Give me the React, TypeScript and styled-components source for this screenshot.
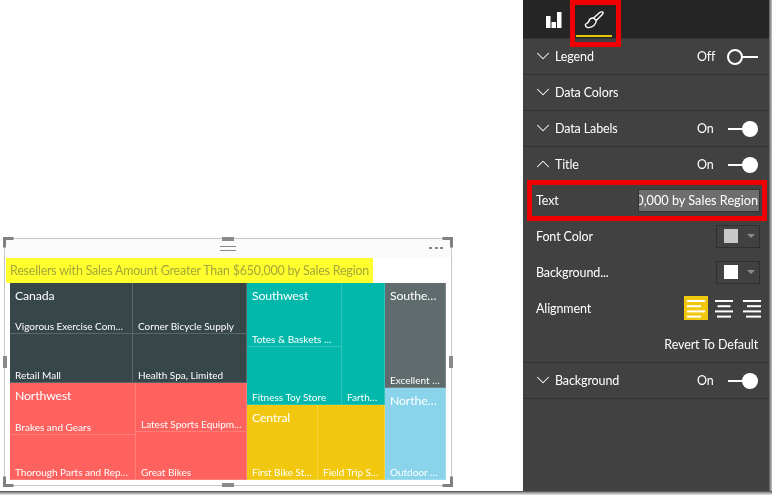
import React from "react";
import styled, { createGlobalStyle } from "styled-components";
import { ChevronDown, ChevronUp } from "lucide-react";

const Global = createGlobalStyle`
  html, body { margin: 0; padding: 0; background: #fff; }
  body { font-family: "Lato", "Open Sans", sans-serif; }
`;

const Page = styled.div`
  width: 772px;
  height: 495px;
  display: flex;
  flex-direction: column;
  overflow: hidden;
  background: #fff;
  filter: blur(0.35px);
`;

const Body = styled.div`
  height: 491px;
  flex: none;
  display: flex;
`;

const BottomEdge = styled.div`
  height: 4px;
  flex: none;
  background: linear-gradient(#4a4a4a, #a8a8a8 50%, #e4e4e4);
`;

const RightEdge = styled.div`
  width: 3px;
  flex: none;
  background: linear-gradient(90deg, #5a5a5a, #c8c8c8);
`;

const Canvas = styled.main`
  width: 523px;
  flex: none;
  padding: 238px 0 0 4px;
  box-sizing: border-box;
`;

const Visual = styled.section`
  width: 448px;
  height: 248px;
  box-sizing: border-box;
  border: 1px solid #c8c8c8;
  position: relative;
  display: flex;
  flex-direction: column;
`;

const Handle = styled.span<{ $x: string; $y: string; $w: number; $h: number }>`
  position: absolute;
  background: #8a8a8a;
  width: ${(p) => p.$w}px;
  height: ${(p) => p.$h}px;
  ${(p) => p.$x}
  ${(p) => p.$y}
`;

const Corner = styled.svg<{ $pos: string }>`
  position: absolute;
  width: 11px;
  height: 11px;
  ${(p) => p.$pos}
`;

const VisualHeader = styled.div`
  height: 19px;
  flex: none;
  background: #fafafa;
  position: relative;
`;

const Grip = styled.span`
  position: absolute;
  left: 215px;
  top: 7px;
  width: 16px;
  height: 3px;
  border-top: 1px solid #8a8a8a;
  border-bottom: 1px solid #8a8a8a;
`;

const Dots = styled.span`
  position: absolute;
  right: 8px;
  top: 8px;
  display: flex;
  gap: 2.5px;
`;

const Dot = styled.i`
  width: 3px;
  height: 2px;
  background: #888;
`;

const TitleBar = styled.div`
  height: 25px;
  flex: none;
  display: flex;
  margin-left: 1px;
`;

const TitleText = styled.span`
  background: #ffff2e;
  color: #a5a53a;
  font-size: 12.4px;
  letter-spacing: -0.17px;
  line-height: 25px;
  padding: 0 4px;
  width: 367px;
  box-sizing: border-box;
  white-space: nowrap;
  overflow: hidden;
`;

const Treemap = styled.div`
  margin-left: 5px;
  width: 436px;
  height: 197px;
  display: flex;
`;

const Stack = styled.div<{ $size: number }>`
  flex: 0 0 ${(p) => p.$size}px;
  display: flex;
  flex-direction: column;
  min-width: 0;
  min-height: 0;
`;

const Band = styled.div<{ $size: number }>`
  flex: 0 0 ${(p) => p.$size}px;
  display: flex;
  min-width: 0;
  min-height: 0;
`;

const Cell = styled.div<{ $size: number; $bg: string }>`
  flex: 0 0 ${(p) => p.$size}px;
  background: ${(p) => p.$bg};
  box-shadow: inset -1px -1px 0 rgba(255, 255, 255, 0.18);
  box-sizing: border-box;
  padding: 0 3px 0 5px;
  display: flex;
  flex-direction: column;
  justify-content: space-between;
  color: #fff;
  min-width: 0;
  overflow: hidden;
`;

const Region = styled.div`
  font-size: 12.3px;
  letter-spacing: -0.15px;
  line-height: 17px;
  margin-top: 4px;
  padding-right: 3px;
  white-space: nowrap;
  overflow: hidden;
  text-overflow: ellipsis;
`;

const Leaf = styled.div`
  margin-top: auto;
  font-size: 10px;
  line-height: 13px;
  margin-bottom: 1px;
  padding-right: 2px;
  white-space: nowrap;
  overflow: hidden;
  text-overflow: ellipsis;
`;

const Panel = styled.aside`
  width: 246px;
  flex: none;
  background: #414141;
  color: #fff;
  position: relative;
  font-size: 12.5px;
  letter-spacing: -0.12px;
`;

const Tabs = styled.nav`
  height: 38px;
  background: #252525;
  display: flex;
  padding-left: 13px;
  gap: 4px;
`;

const Tab = styled.div<{ $active?: boolean }>`
  width: 36px;
  height: 38px;
  box-sizing: border-box;
  padding-top: 2px;
  display: flex;
  align-items: center;
  justify-content: center;
  position: relative;
  ${(p) => p.$active && `&::after { content: ""; position: absolute; left: 0; right: 0; bottom: 1px; height: 2px; background: #e8c406; }`}
`;

const RedFrame = styled.div`
  position: absolute;
  border: 5px solid #f00000;
  box-sizing: border-box;
`;

const TabFrame = styled(RedFrame)`
  left: 47px;
  top: 0;
  width: 51px;
  height: 47px;
`;

const TextFrame = styled(RedFrame)`
  left: 4px;
  top: 180px;
  width: 240px;
  height: 41px;
`;

const Section = styled.div`
  height: 36px;
  box-sizing: border-box;
  border-top: 1px solid #333;
  display: flex;
  align-items: center;
  padding: 0 11px 1px 9px;
  gap: 6px;
`;

const LastSection = styled(Section)`
  border-bottom: 1px solid #333;
  height: 37px;
`;

const SectionLabel = styled.span`
  flex: 1;
`;

const State = styled.span`
  width: 24px;
`;

const DownIcon = styled(ChevronDown)`
  margin-right: -5px;
  flex: none;
`;

const UpIcon = styled(ChevronUp)`
  margin-right: -5px;
  flex: none;
`;

const Toggle = styled.span<{ $on?: boolean }>`
  width: 31px;
  height: 16px;
  margin-top: 1px;
  position: relative;
  display: block;
  &::before {
    content: "";
    position: absolute;
    left: 1px;
    right: 0;
    top: 7px;
    height: 2px;
    background: #fff;
  }
  &::after {
    content: "";
    position: absolute;
    top: 0;
    box-sizing: border-box;
    width: 16px;
    height: 16px;
    border-radius: 50%;
    ${(p) =>
      p.$on
        ? "right: 0; background: #fff;"
        : "left: 0; background: #414141; border: 2px solid #fff;"}
  }
`;

const Field = styled.div`
  height: 36px;
  display: flex;
  align-items: center;
  justify-content: space-between;
  padding: 0 9px 0 13px;
`;

const TextInput = styled.div`
  width: 122px;
  height: 23px;
  background: #6e6e6e;
  border: 1px solid #333;
  box-sizing: border-box;
  font-size: 12.7px;
  letter-spacing: 0;
  line-height: 21px;
  padding-right: 1px;
  color: #fff;
  overflow: hidden;
  white-space: nowrap;
  display: flex;
  justify-content: flex-end;
`;

const ColorPick = styled.div`
  width: 44px;
  height: 23px;
  border: 1px solid #2e2e2e;
  box-sizing: border-box;
  display: flex;
  align-items: center;
  padding-left: 7px;
  gap: 9px;
`;

const Swatch = styled.span<{ $c: string }>`
  width: 14px;
  height: 14px;
  background: ${(p) => p.$c};
`;

const Caret = styled.span`
  width: 0;
  height: 0;
  border-left: 4px solid transparent;
  border-right: 4px solid transparent;
  border-top: 4px solid #8c8c8c;
`;

const AlignGroup = styled.div`
  display: flex;
  align-items: center;
  gap: 4px;
  margin-right: -4px;
`;

const AlignBtn = styled.span<{ $active?: boolean }>`
  width: 24px;
  height: 24px;
  display: flex;
  align-items: center;
  justify-content: center;
  background: ${(p) => (p.$active ? "#f2c80f" : "transparent")};
`;

const Revert = styled.div`
  height: 36px;
  display: flex;
  align-items: center;
  justify-content: flex-end;
  padding-right: 11px;
`;

const dk = "#374649";
const rd = "#fd625e";
const tl = "#01b8aa";
const yl = "#f2c80f";
const gy = "#5f6b6d";
const bl = "#8ad4eb";

function Align({ mode, active }: { mode: "l" | "c" | "r"; active?: boolean }) {
  const rows = mode === "l" ? [18, 14, 18, 14] : mode === "c" ? [18, 13, 18, 14] : [18, 14, 18, 15];
  return (
    <AlignBtn $active={active}>
      <svg width="18" height="20" viewBox="0 0 18 20">
        {rows.map((w, i) => {
          const x = mode === "l" ? 0 : mode === "c" ? (18 - w) / 2 : 18 - w;
          return <rect key={i} x={x} y={2 + i * 5.2} width={w} height="2" fill="#fff" />;
        })}
      </svg>
    </AlignBtn>
  );
}

export default function App() {
  return (
    <>
      <Global />
      <Page>
        <Body>
          <Canvas>
            <Visual>
              <VisualHeader>
                <Grip />
                <Dots><Dot /><Dot /><Dot /></Dots>
              </VisualHeader>
              <TitleBar>
                <TitleText>Resellers with Sales Amount Greater Than $650,000 by Sales Region</TitleText>
              </TitleBar>
              <Treemap>
                <Stack $size={237}>
                  <Band $size={100}>
                    <Stack $size={123}>
                      <Cell $size={51} $bg={dk}><Region>Canada</Region><Leaf>Vigorous Exercise Company</Leaf></Cell>
                      <Cell $size={49} $bg={dk}><Leaf>Retail Mall</Leaf></Cell>
                    </Stack>
                    <Stack $size={114}>
                      <Cell $size={51} $bg={dk}><Leaf>Corner Bicycle Supply</Leaf></Cell>
                      <Cell $size={49} $bg={dk}><Leaf>Health Spa, Limited</Leaf></Cell>
                    </Stack>
                  </Band>
                  <Band $size={97}>
                    <Stack $size={126}>
                      <Cell $size={52} $bg={rd}><Region>Northwest</Region><Leaf>Brakes and Gears</Leaf></Cell>
                      <Cell $size={45} $bg={rd}><Leaf>Thorough Parts and Repair Services</Leaf></Cell>
                    </Stack>
                    <Stack $size={111}>
                      <Cell $size={49} $bg={rd}><Leaf>Latest Sports Equipment</Leaf></Cell>
                      <Cell $size={48} $bg={rd}><Leaf>Great Bikes</Leaf></Cell>
                    </Stack>
                  </Band>
                </Stack>
                <Stack $size={138}>
                  <Band $size={122}>
                    <Stack $size={95}>
                      <Cell $size={64} $bg={tl}><Region>Southwest</Region><Leaf>Totes &amp; Baskets Company</Leaf></Cell>
                      <Cell $size={58} $bg={tl}><Leaf>Fitness Toy Store</Leaf></Cell>
                    </Stack>
                    <Stack $size={43}>
                      <Cell $size={122} $bg={tl}><Leaf>Farthest Bike</Leaf></Cell>
                    </Stack>
                  </Band>
                  <Band $size={75}>
                    <Cell $size={71} $bg={yl}><Region>Central</Region><Leaf>First Bike Store</Leaf></Cell>
                    <Cell $size={67} $bg={yl}><Leaf>Field Trip Store</Leaf></Cell>
                  </Band>
                </Stack>
                <Stack $size={61}>
                  <Cell $size={105} $bg={gy}><Region>Southeast</Region><Leaf>Excellent Riding</Leaf></Cell>
                  <Cell $size={92} $bg={bl}><Region>Northeast</Region><Leaf>Outdoor Sports</Leaf></Cell>
                </Stack>
              </Treemap>
              <Corner $pos="left: -2px; top: -2px;" viewBox="0 0 11 11"><path d="M1.5 10.5V1.5H10.5" fill="none" stroke="#808080" strokeWidth="3" /></Corner>
              <Corner $pos="right: -2px; top: -2px;" viewBox="0 0 11 11"><path d="M0.5 1.5H9.5V10.5" fill="none" stroke="#808080" strokeWidth="3" /></Corner>
              <Corner $pos="left: -2px; bottom: -2px;" viewBox="0 0 11 11"><path d="M1.5 0.5V9.5H10.5" fill="none" stroke="#808080" strokeWidth="3" /></Corner>
              <Corner $pos="right: -2px; bottom: -2px;" viewBox="0 0 11 11"><path d="M0.5 9.5H9.5V0.5" fill="none" stroke="#808080" strokeWidth="3" /></Corner>
              <Handle $x="left: 217px;" $y="top: -2px;" $w={12} $h={4} />
              <Handle $x="left: 217px;" $y="bottom: -2px;" $w={12} $h={4} />
              <Handle $x="left: -2px;" $y="top: 117px;" $w={4} $h={12} />
              <Handle $x="right: -2px;" $y="top: 117px;" $w={4} $h={12} />
            </Visual>
          </Canvas>
          <Panel>
            <Tabs>
              <Tab>
                <svg width="16" height="16" viewBox="0 0 16 16">
                  <rect x="0" y="4" width="4.5" height="12" fill="#fff" />
                  <rect x="5.5" y="10" width="4.5" height="6" fill="#fff" />
                  <rect x="11" y="0" width="4.5" height="16" fill="#fff" />
                </svg>
              </Tab>
              <Tab $active>
                <svg width="20" height="18" viewBox="0 0 20 18" fill="none" stroke="#fff" strokeWidth="1.4" strokeLinejoin="round">
                  <path d="M19 1.2C17.8 0.6 16.5 0.8 15.4 1.8L9.6 7L12.2 9.6L17.6 4.2C18.6 3.2 19.4 2.2 19 1.2Z" />
                  <path d="M9.6 7C7.2 6.8 5.4 8 5 10C4.7 11.6 3.2 12.2 1.4 13.4C1.2 15.4 2.6 16.8 4.8 16.6C8.6 16.4 12.2 13.6 12.2 9.6" />
                </svg>
              </Tab>
            </Tabs>
            <TabFrame />
            <Section><DownIcon size={22} strokeWidth={1.1} /><SectionLabel>Legend</SectionLabel><State>Off</State><Toggle /></Section>
            <Section><DownIcon size={22} strokeWidth={1.1} /><SectionLabel>Data Colors</SectionLabel></Section>
            <Section><DownIcon size={22} strokeWidth={1.1} /><SectionLabel>Data Labels</SectionLabel><State>On</State><Toggle $on /></Section>
            <Section><UpIcon size={22} strokeWidth={1.1} /><SectionLabel>Title</SectionLabel><State>On</State><Toggle $on /></Section>
            <TextFrame />
            <Field>Text<TextInput>0,000 by Sales Region</TextInput></Field>
            <Field>Font Color<ColorPick><Swatch $c="#c8c8c8" /><Caret /></ColorPick></Field>
            <Field>Background...<ColorPick><Swatch $c="#fff" /><Caret /></ColorPick></Field>
            <Field>Alignment<AlignGroup><Align mode="l" active /><Align mode="c" /><Align mode="r" /></AlignGroup></Field>
            <Revert>Revert To Default</Revert>
            <LastSection><DownIcon size={22} strokeWidth={1.1} /><SectionLabel>Background</SectionLabel><State>On</State><Toggle $on /></LastSection>
          </Panel>
          <RightEdge />
        </Body>
        <BottomEdge />
      </Page>
    </>
  );
}
